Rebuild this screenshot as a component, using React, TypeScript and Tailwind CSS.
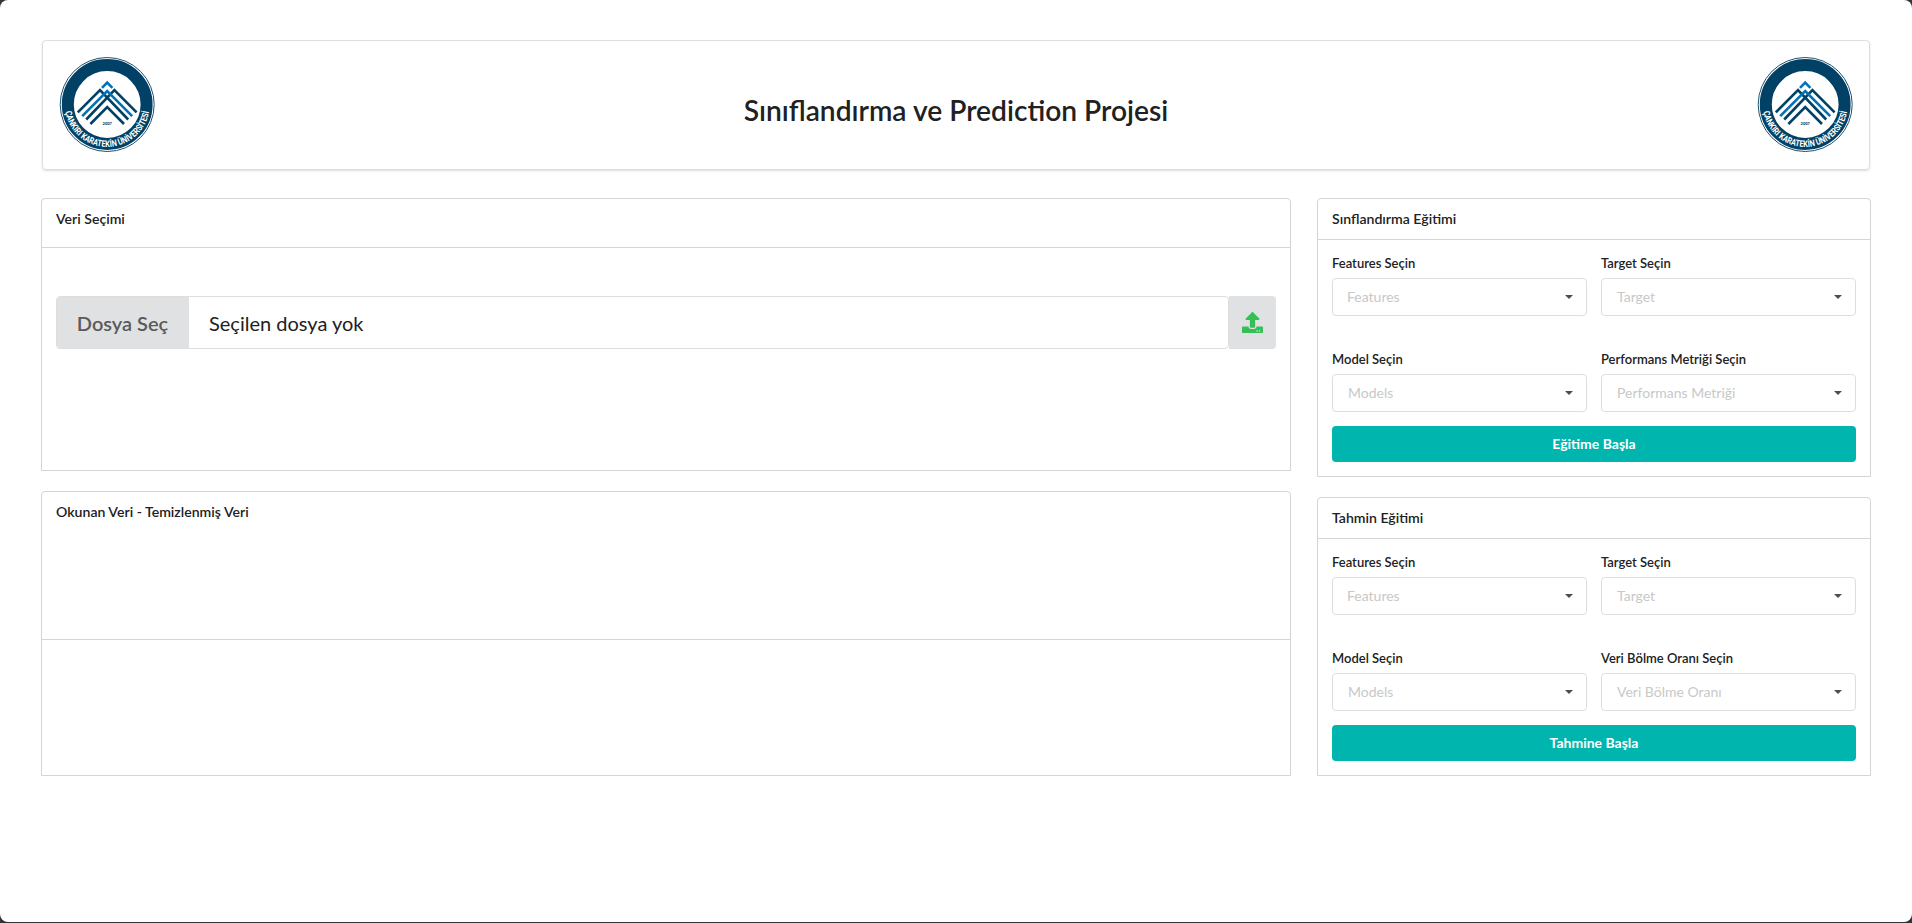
import React from "react";
import { FaUpload } from "react-icons/fa";

function Logo() {
  return (
    <svg viewBox="-0.2 0.5 96 96" className="h-24 w-24 shrink-0">
      <defs>
        <path id="ring-text" d="M 5.6 52 A 42.6 42.6 0 0 0 90.4 52" />
      </defs>
      <circle cx="48" cy="48" r="47" fill="#fff" stroke="#1d5173" strokeWidth="1" />
      <circle cx="48" cy="48" r="39.4" fill="#fff" stroke="#004165" strokeWidth="12" />
      <g fill="none" strokeWidth="2.6" stroke="#004165">
        <path d="M18.6 55.8 L40.8 33.6 L69 63" />
        <path d="M77.4 55.8 L55.2 33.6 L27 63" />
        <path d="M31.2 67.5 L48 50.7 L64.8 67.5" />
        <path d="M23 59.6 L48 34.6 L73 59.6" stroke="#0072b5" />
        <path d="M42.8 31.4 L48 26.2 L53.2 31.4" stroke="#0072b5" />
      </g>
      <text x="48" y="68.4" textAnchor="middle" fontSize="4" fontWeight="900" fill="#004165" className="font-['Lato',sans-serif]">2007</text>
      <text fontSize="9" fontWeight="700" fill="#fff" className="font-['Liberation_Sans_Narrow','Roboto',sans-serif]">
        <textPath href="#ring-text" startOffset="50%" textAnchor="middle" textLength="119" lengthAdjust="spacingAndGlyphs">
          ÇANKIRI KARATEKİN ÜNİVERSİTESİ
        </textPath>
      </text>
    </svg>
  );
}

function Select({ label, placeholder }: { label: string; placeholder: string }) {
  return (
    <div>
      <label className="mb-1.5 block text-[13px] leading-[18px] font-semibold">{label}</label>
      <div className="flex h-[38px] items-center justify-between rounded border border-[#dededf] pr-[13px] pl-[15px] text-sm text-[#c8c8c8]">
        <span className={placeholder === "Features" ? "-ml-px" : ""}>{placeholder}</span>
        <svg viewBox="0 0 8 4" className="h-1 w-2 fill-[#4d4d4d]">
          <path d="M0 0H8L4 4Z" />
        </svg>
      </div>
    </div>
  );
}

function TrainingPanel({ title, fields, action }: { title: string; fields: [string, string][]; action: string }) {
  return (
    <section className="h-[279px] rounded-t border border-[#d4d4d5]">
      <h5 className="h-[41px] border-b border-[#d4d4d5] px-[14px] pt-[11px] text-[14.1px] leading-[18px] font-semibold">{title}</h5>
      <div className="px-[14px] pt-[14px]">
        <div className="grid grid-cols-2 gap-x-[14px] gap-y-[34px]">
          {fields.map(([label, placeholder]) => (
            <Select key={label} label={label} placeholder={placeholder} />
          ))}
        </div>
        <button className="mt-[14px] block h-9 w-full rounded bg-[#00b5ad] text-sm leading-[14px] font-bold text-white">{action}</button>
      </div>
    </section>
  );
}

export default function App() {
  return (
    <div className="h-[923px] bg-[#333437] pb-px font-['Lato',sans-serif] text-[#212122]">
      <main className="h-full rounded-[8px] bg-white pt-10 pr-[41px] pl-[41px]">
        <header className="mx-px flex h-[130px] justify-between rounded border border-[#dededf] px-4 pt-4 shadow-[0_1px_2px_0_rgba(34,36,38,0.15)]">
          <Logo />
          <h1 className="mt-[35px] text-[28.2px] leading-9 font-semibold">Sınıflandırma ve Prediction Projesi</h1>
          <Logo />
        </header>
        <div className="mt-7 flex gap-[26px]">
          <div className="flex w-[1250px] flex-col gap-5">
            <section className="h-[273px] rounded-t border border-[#d4d4d5]">
              <h5 className="h-[49px] border-b border-[#d4d4d5] px-[14px] pt-[11px] text-[14.1px] leading-[18px] font-semibold">Veri Seçimi</h5>
              <div className="mx-[14px] mt-12 flex h-[53px]">
                <div className="flex flex-1 overflow-hidden rounded border border-[#dededf]">
                  <button className="-m-px w-[133px] bg-[#e0e1e2] text-xl font-semibold text-[#5a5a5a]">Dosya Seç</button>
                  <span className="flex items-center pl-[21px] text-xl">Seçilen dosya yok</span>
                </div>
                <button className="flex w-[47px] items-center justify-center rounded-r bg-[#e0e1e2] text-[#35bf56]">
                  <FaUpload size={21} />
                </button>
              </div>
            </section>
            <section className="h-[285px] rounded-t border border-[#d4d4d5]">
              <h5 className="h-[148px] border-b border-[#d4d4d5] px-[14px] pt-[11px] text-[14.1px] leading-[18px] font-semibold">Okunan Veri - Temizlenmiş Veri</h5>
            </section>
          </div>
          <div className="flex flex-1 flex-col gap-5">
            <TrainingPanel
              title="Sınflandırma Eğitimi"
              fields={[
                ["Features Seçin", "Features"],
                ["Target Seçin", "Target"],
                ["Model Seçin", "Models"],
                ["Performans Metriği Seçin", "Performans Metriği"],
              ]}
              action="Eğitime Başla"
            />
            <TrainingPanel
              title="Tahmin Eğitimi"
              fields={[
                ["Features Seçin", "Features"],
                ["Target Seçin", "Target"],
                ["Model Seçin", "Models"],
                ["Veri Bölme Oranı Seçin", "Veri Bölme Oranı"],
              ]}
              action="Tahmine Başla"
            />
          </div>
        </div>
      </main>
    </div>
  );
}
